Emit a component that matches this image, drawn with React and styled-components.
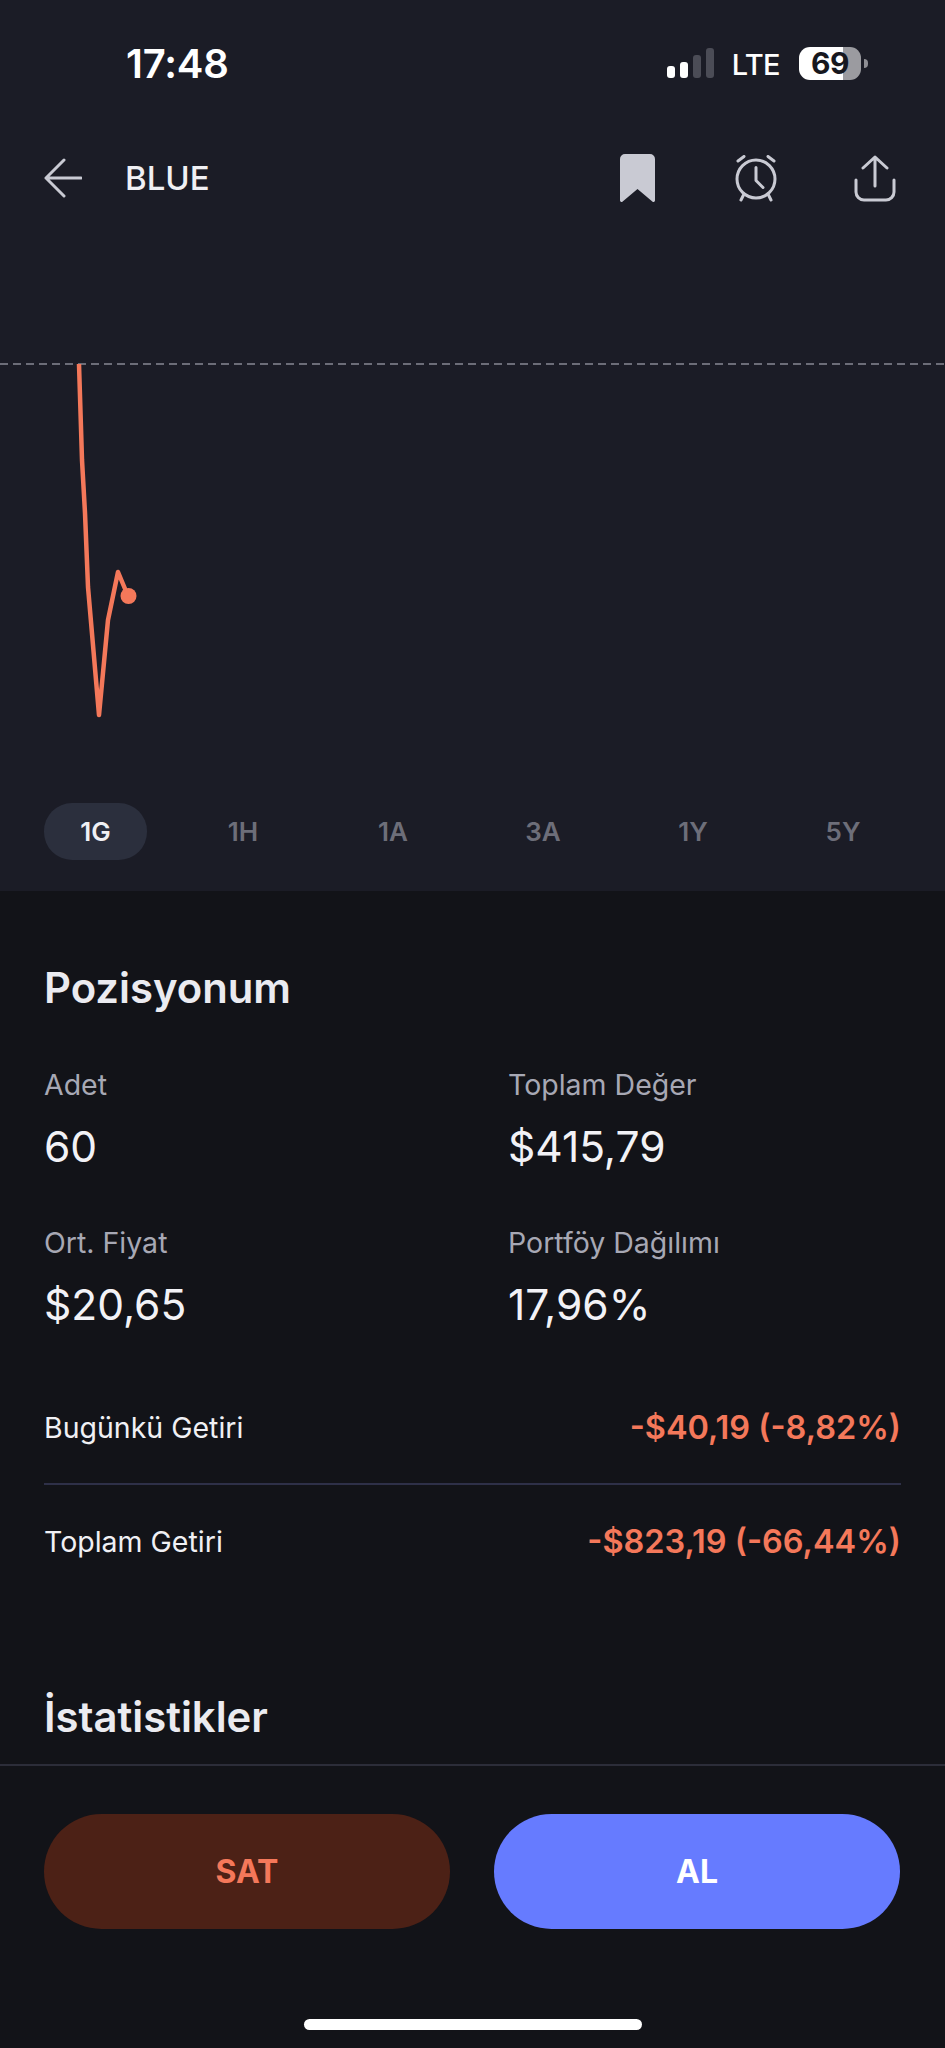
import React from "react";
import styled, { createGlobalStyle } from "styled-components";

const Global = createGlobalStyle`
  html, body { margin: 0; padding: 0; background: #121318; }
  body { font-family: Inter, "Noto Sans", sans-serif; -webkit-font-smoothing: antialiased; }
  * { box-sizing: border-box; }
`;

const Page = styled.div`
  width: 945px;
  height: 2048px;
  display: flex;
  flex-direction: column;
  overflow: hidden;
  background: #121318;
  color: #f0f0f4;
`;

const Top = styled.section`
  height: 891px;
  background: #1b1c26;
  display: flex;
  flex-direction: column;
  flex: none;
`;

const StatusBar = styled.div`
  height: 128px;
  padding: 41px 84px 0 126px;
  display: flex;
  justify-content: space-between;
  align-items: flex-start;
`;

const Clock = styled.div`
  font-size: 40px;
  font-weight: 600;
  line-height: 46px;
  letter-spacing: -0.2px;
  color: #fff;
`;

const StatusRight = styled.div`
  display: flex;
  align-items: center;
  height: 46px;
  margin-top: -1px;
`;

const Signal = styled.div`
  display: flex;
  align-items: flex-end;
  gap: 5px;
  height: 30px;
  margin-right: 18px;
`;

const Bar = styled.i`
  display: block;
  width: 8px;
  height: ${(p) => p.$h}px;
  border-radius: 3px;
  background: ${(p) => (p.$on ? "#fff" : "#4b4c56")};
`;

const Lte = styled.span`
  font-size: 29px;
  font-weight: 500;
  color: #fff;
  letter-spacing: -0.6px;
  margin: 3px 19px 0 0;
`;

const Battery = styled.div`
  position: relative;
  width: 62px;
  height: 33px;
  border-radius: 11px;
  background: linear-gradient(90deg, #fff 0 44px, #9b9ba0 44px);
  display: flex;
  align-items: center;
  justify-content: center;
  font-size: 30px;
  font-weight: 700;
  color: #16171e;
  letter-spacing: -0.4px;
  &::after {
    content: "";
    position: absolute;
    right: -7px;
    top: 12px;
    width: 4px;
    height: 9px;
    border-radius: 0 4px 4px 0;
    background: #8f8f95;
  }
`;

const Header = styled.header`
  height: 100px;
  padding: 0 49px 0 44px;
  display: flex;
  align-items: center;
  flex: none;
`;

const Symbol = styled.h1`
  margin: 0 0 0 43px;
  font-size: 33px;
  font-weight: 500;
  color: #f0f0f4;
  flex: 1;
`;

const IconRow = styled.div`
  display: flex;
  align-items: center;
  gap: 77px;
`;

const Bookmark = styled.svg`
  display: block;
  margin-right: 3px;
  fill: #c9cad3;
`;

const Chart = styled.div`
  flex: 1;
  min-height: 0;
`;

const ChartSvg = styled.svg`
  display: block;
  width: 945px;
  height: 575px;
`;

const Tabs = styled.nav`
  display: grid;
  grid-template-columns: 145px repeat(5, 150px);
  align-items: center;
  height: 57px;
  margin: 0 0 31px;
  padding-left: 23px;
`;

const Tab = styled.div`
  width: 103px;
  height: 57px;
  justify-self: center;
  border-radius: 28px;
  display: flex;
  align-items: center;
  justify-content: center;
  font-size: 26px;
  font-weight: 600;
  color: ${(p) => (p.$active ? "#f0f0f4" : "#6d6e79")};
  background: ${(p) => (p.$active ? "#2b2f3d" : "transparent")};
`;

const Body = styled.main`
  flex: 1;
  min-height: 0;
  overflow: hidden;
  padding: 0 44px;
`;

const Title = styled.h2`
  margin: ${(p) => p.$top}px 0 0;
  font-size: 41.800px;
  line-height: 50px;
  font-weight: 600;
  color: #ebebf0;
`;

const Stats = styled.div`
  display: grid;
  grid-template-columns: 464px 1fr;
  row-gap: 51px;
  margin-top: 54px;
`;

const Stat = styled.div`
  display: flex;
  flex-direction: column;
  gap: 17px;
`;

const Label = styled.span`
  font-size: 28.500px;
  line-height: 36px;
  color: #a7a8b4;
`;

const Value = styled.span`
  font-size: 42.500px;
  line-height: 54px;
  font-weight: 400;
  color: #f2f2f6;
`;

const Returns = styled.div`
  margin-top: 40px;
`;

const ReturnRow = styled.div`
  display: flex;
  justify-content: space-between;
  align-items: center;
  height: 113px;
  border-bottom: ${(p) => (p.$line ? "2px solid #2e3048" : "none")};
`;

const ReturnLabel = styled.span`
  font-size: 28.500px;
  font-weight: 400;
  color: #f0f0f4;
`;

const ReturnValue = styled.span`
  font-size: 32.500px;
  font-weight: 640;
  color: #f4785a;
`;

const Footer = styled.footer`
  height: 284px;
  flex: none;
  border-top: 2px solid #2c2d39;
  display: flex;
  flex-direction: column;
  align-items: center;
  padding-top: 48px;
`;

const Buttons = styled.div`
  width: 100%;
  padding: 0 45px 0 44px;
  display: grid;
  grid-template-columns: 1fr 1fr;
  gap: 44px;
`;

const TradeButton = styled.button`
  height: 115px;
  border: 0;
  border-radius: 58px;
  font: 700 32px Inter, sans-serif;
  background: ${(p) => (p.$buy ? "#667bff" : "#4c2116")};
  color: ${(p) => (p.$buy ? "#fff" : "#f4785a")};
`;

const HomeBar = styled.div`
  width: 338px;
  height: 11px;
  border-radius: 6px;
  background: #fff;
  margin-top: 90px;
`;

const Glyph = styled.svg`
  display: block;
  fill: none;
  stroke: #c9cad3;
  stroke-width: 3;
  stroke-linecap: round;
  stroke-linejoin: round;
`;

const ranges = ["1G", "1H", "1A", "3A", "1Y", "5Y"];
const stats = [
  ["Adet", "60"],
  ["Toplam Değer", "$415,79"],
  ["Ort. Fiyat", "$20,65"],
  ["Portföy Dağılımı", "17,96%"],
];

export default function App() {
  return (
    <Page>
      <Global />
      <Top>
        <StatusBar>
          <Clock>17:48</Clock>
          <StatusRight>
            <Signal>
              <Bar $on $h={12} />
              <Bar $on $h={16} />
              <Bar $h={23} />
              <Bar $h={30} />
            </Signal>
            <Lte>LTE</Lte>
            <Battery>69</Battery>
          </StatusRight>
        </StatusBar>
        <Header>
          <Glyph width="38" height="40" viewBox="0 0 38 40">
            <path d="M37 20H2M20 2 2 20l18 18" />
          </Glyph>
          <Symbol>BLUE</Symbol>
          <IconRow>
            <Bookmark width="35" height="48" viewBox="0 0 35 48">
              <path d="M5 0h25a5 5 0 0 1 5 5v41.500a1.500 1.500 0 0 1-2.400 1.200L17.500 35 2.400 47.700A1.500 1.500 0 0 1 0 46.500V5a5 5 0 0 1 5-5z" />
            </Bookmark>
            <Glyph width="42" height="47" viewBox="0 0 42 47">
              <circle cx="21" cy="24" r="19" />
              <path d="M21 12.500v13l7 7M3 6l6-4.500M39 6l-6-4.500M9 39l-3 6M33 39l3 6" />
            </Glyph>
            <Glyph width="42" height="47" viewBox="0 0 42 47">
              <path d="M21 31V2M9 13 21 2l12 11M2 25v12a8 8 0 0 0 8 8h22a8 8 0 0 0 8-8V25" />
            </Glyph>
          </IconRow>
        </Header>
        <Chart>
          <ChartSvg viewBox="0 228 945 575">
            <line x1="0" y1="364" x2="945" y2="364" stroke="#6c6d78" strokeWidth="2" strokeDasharray="8 5" />
            <polyline
              points="79,364 82,460 85,513 88,587 99,715 108,620 118,572 128,596"
              fill="none"
              stroke="#f4785a"
              strokeWidth="4.500"
              strokeLinejoin="round"
            />
            <circle cx="128.500" cy="596" r="8" fill="#f4785a" />
          </ChartSvg>
        </Chart>
        <Tabs>
          {ranges.map((r, i) => (
            <Tab key={r} $active={i === 0}>{r}</Tab>
          ))}
        </Tabs>
      </Top>
      <Body>
        <Title $top={72}>Pozisyonum</Title>
        <Stats>
          {stats.map(([label, value]) => (
            <Stat key={label}>
              <Label>{label}</Label>
              <Value>{value}</Value>
            </Stat>
          ))}
        </Stats>
        <Returns>
          <ReturnRow $line>
            <ReturnLabel>Bugünkü Getiri</ReturnLabel>
            <ReturnValue>-$40,19 (-8,82%)</ReturnValue>
          </ReturnRow>
          <ReturnRow>
            <ReturnLabel>Toplam Getiri</ReturnLabel>
            <ReturnValue>-$823,19 (-66,44%)</ReturnValue>
          </ReturnRow>
        </Returns>
        <Title $top={94}>İstatistikler</Title>
      </Body>
      <Footer>
        <Buttons>
          <TradeButton>SAT</TradeButton>
          <TradeButton $buy>AL</TradeButton>
        </Buttons>
        <HomeBar />
      </Footer>
    </Page>
  );
}
